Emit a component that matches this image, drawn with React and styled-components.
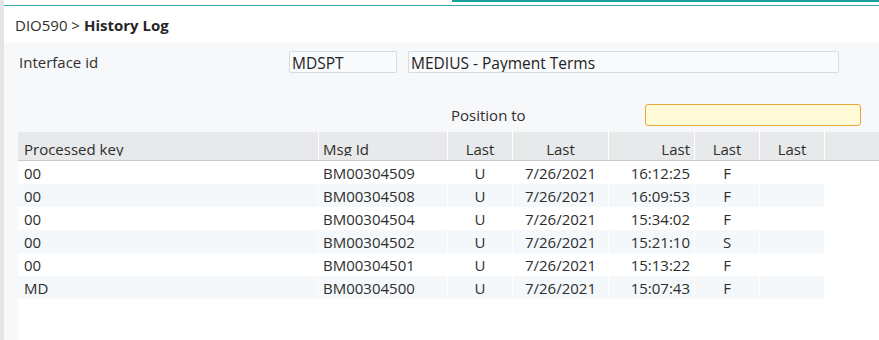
import React from "react";
import styled, { createGlobalStyle } from "styled-components";

const Global = createGlobalStyle`
  html, body { margin: 0; padding: 0; background: #fff; overflow: hidden; }
  body { font-family: "Open Sans", "Noto Sans", sans-serif; color: #2e2e2e; }
  * { box-sizing: border-box; }
`;

const Page = styled.div`
  display: flex;
  width: 879px;
  height: 340px;
  overflow: hidden;
`;

const SideStrip = styled.div`
  width: 4px;
  flex: none;
  background: #e4e4e4;
`;

const Main = styled.div`
  flex: 1;
  display: flex;
  flex-direction: column;
  min-width: 0;
`;

const TabBar = styled.div`
  height: 6px;
  display: flex;
  justify-content: flex-end;
  align-items: flex-start;
  border-bottom: 1px solid #3aa9a5;
  flex: none;
`;

const ActiveTab = styled.div`
  width: 427px;
  height: 2px;
  background: #17a09a;
`;

const Breadcrumb = styled.div`
  height: 37px;
  flex: none;
  display: flex;
  align-items: center;
  padding-left: 11px;
  font-size: 15px;
  color: #2e2e2e;
  gap: 4px;
  b { font-weight: 700; color: #262626; }
`;

const Panel = styled.div`
  flex: 1;
  background: #f7f8fa;
  padding: 8px 0 0 14px;
  display: flex;
  flex-direction: column;
  min-height: 0;
`;

const FormRow = styled.div`
  display: flex;
  align-items: center;
  height: 22px;
  padding-left: ${(p) => p.$indent || 0}px;
  margin-top: ${(p) => p.$top || 0}px;
`;

const Label = styled.div`
  width: ${(p) => p.$width}px;
  font-size: 15px;
  padding-left: ${(p) => p.$pad || 0}px;
  flex: none;
  white-space: nowrap;
  color: #2e2e2e;
`;

const Spacer = styled.div`
  width: ${(p) => p.$width}px;
  flex: none;
`;

const TextField = styled.div`
  width: ${(p) => p.$width}px;
  height: 22px;
  flex: none;
  border: 1px solid ${(p) => (p.$highlight ? "#eba63a" : "#d9dcdf")};
  background: ${(p) => (p.$highlight ? "#fffad8" : "#f9fafb")};
  border-radius: ${(p) => (p.$highlight ? "3px" : "1px")};
  font-size: 15.5px;
  line-height: 18px;
  padding: 2px 0 0 2px;
  color: #222;
  white-space: nowrap;
  overflow: hidden;
`;

const TableWrap = styled.div`
  margin-top: 6px;
  flex: 1;
  background: #fff;
  min-height: 0;
  overflow: hidden;
`;

const HeaderRow = styled.div`
  display: flex;
  height: 29px;
  background: #e8e9ea;
  border-bottom: 1px solid #c9cbcd;
`;

const HeadCell = styled.div`
  width: ${(p) => p.$width}px;
  flex: ${(p) => (p.$fill ? "1" : "none")};
  border-left: ${(p) => (p.$first ? "none" : "1px solid #fff")};
  padding: 7px ${(p) => p.$pr || 0}px 0 ${(p) => p.$pl || 0}px;
  text-align: ${(p) => p.$align || "left"};
  font-size: 15px;
  color: #2e2e2e;
`;

const HeadLabel = styled.span`
  display: block;
  height: 17px;
  line-height: 20px;
  overflow: hidden;
  white-space: nowrap;
`;

const DataRow = styled.div`
  display: flex;
  width: 806px;
  height: 23px;
  background: ${(p) => (p.$striped ? "#f4f8fa" : "#fff")};
`;

const Cell = styled.div`
  width: ${(p) => p.$width}px;
  flex: none;
  border-left: ${(p) => (p.$first ? "none" : "1px solid #fff")};
  padding: 2px ${(p) => p.$pr || 0}px 0 ${(p) => p.$pl || 0}px;
  text-align: ${(p) => p.$align || "left"};
  font-size: 15px;
  line-height: 21px;
  color: #2e2e2e;
  white-space: nowrap;
  overflow: hidden;
`;

const columns = [
  { title: "Processed key", width: 300, align: "left", pl: 6 },
  { title: "Msg Id", width: 129, align: "left", pl: 4 },
  { title: "Last", width: 65, align: "center" },
  { title: "Last", width: 96, align: "center" },
  { title: "Last", width: 86, align: "right", pr: 4 },
  { title: "Last", width: 65, align: "center" },
  { title: "Last", width: 65, align: "center" },
];

const rows = [
  ["00", "BM00304509", "U", "7/26/2021", "16:12:25", "F", ""],
  ["00", "BM00304508", "U", "7/26/2021", "16:09:53", "F", ""],
  ["00", "BM00304504", "U", "7/26/2021", "15:34:02", "F", ""],
  ["00", "BM00304502", "U", "7/26/2021", "15:21:10", "S", ""],
  ["00", "BM00304501", "U", "7/26/2021", "15:13:22", "F", ""],
  ["MD", "BM00304500", "U", "7/26/2021", "15:07:43", "F", ""],
];

export default function App() {
  return (
    <>
      <Global />
      <Page>
        <SideStrip />
        <Main>
          <TabBar>
            <ActiveTab />
          </TabBar>
          <Breadcrumb>
            <span>DIO590 &gt;</span>
            <b>History Log</b>
          </Breadcrumb>
          <Panel>
            <FormRow>
              <Label $width={271} $pad={1}>Interface id</Label>
              <TextField $width={108}>MDSPT</TextField>
              <Spacer $width={11} />
              <TextField $width={431}>MEDIUS - Payment Terms</TextField>
            </FormRow>
            <FormRow $indent={433} $top={31}>
              <Label $width={194}>Position to</Label>
              <TextField $width={216} $highlight />
            </FormRow>
            <TableWrap>
              <HeaderRow>
                {columns.map((c, i) => (
                  <HeadCell
                    key={i}
                    $first={i === 0}
                    $width={c.width}
                    $align={c.align}
                    $pl={c.pl}
                    $pr={c.pr}
                  >
                    <HeadLabel>{c.title}</HeadLabel>
                  </HeadCell>
                ))}
                <HeadCell $fill />
              </HeaderRow>
              {rows.map((r, ri) => (
                <DataRow key={ri} $striped={ri % 2 === 1}>
                  {r.map((v, ci) => (
                    <Cell
                      key={ci}
                      $first={ci === 0}
                      $width={columns[ci].width}
                      $align={columns[ci].align}
                      $pl={columns[ci].pl}
                      $pr={columns[ci].pr}
                    >
                      {v}
                    </Cell>
                  ))}
                </DataRow>
              ))}
            </TableWrap>
          </Panel>
        </Main>
      </Page>
    </>
  );
}
